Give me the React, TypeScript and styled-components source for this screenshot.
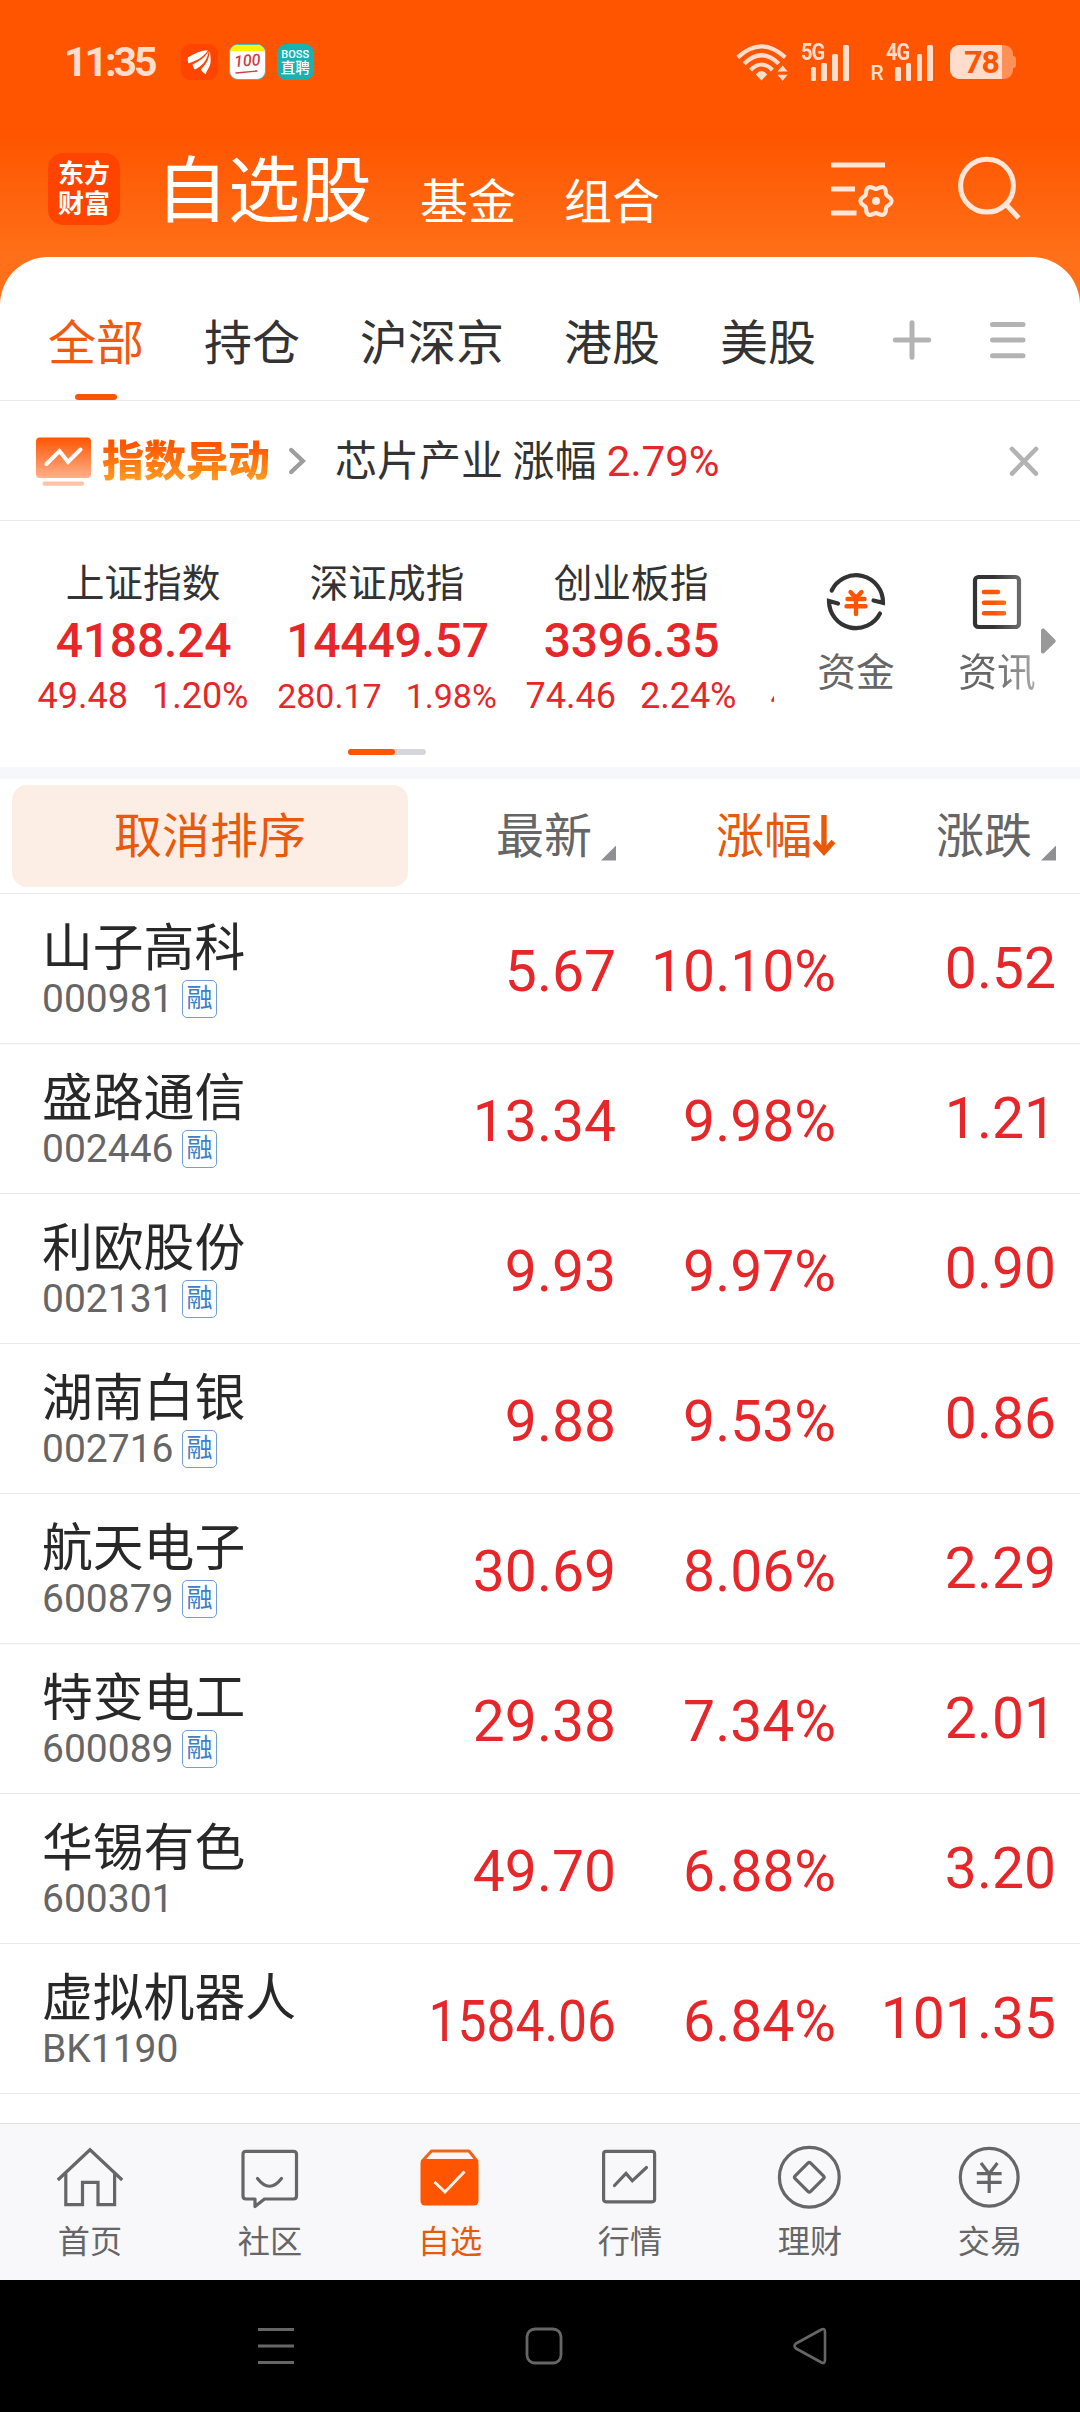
import React from "react";
import styled, { createGlobalStyle, css } from "styled-components";

const FONT = `Roboto, "Noto Sans CJK SC", sans-serif`;
const BRAND = "#ff5500";
const ACCENT = "#e8590c";
const UP = "#e62629";
const INK = "#333333";
const MUTED = "#666666";
const LINE = "#e8e8e8";

const GlobalStyle = createGlobalStyle`
  * { box-sizing: border-box; }
  html, body { margin: 0; padding: 0; background: #000; }
  svg { display: block; flex: none; }
`;

const Screen = styled.div`
  width: 1080px;
  height: 2412px;
  display: flex;
  flex-direction: column;
  overflow: hidden;
  font-family: ${FONT};
  color: ${INK};
  background: #fff;
  white-space: nowrap;
`;

/* ---------- top area ---------- */

const Top = styled.header`
  height: 305px;
  flex: none;
  background: linear-gradient(180deg, ${BRAND} 0, ${BRAND} 135px, #ff7018 257px, #ff7018 100%);
`;

const StatusBar = styled.div`
  height: 124px;
  display: flex;
  align-items: center;
  padding: 0 64px 0 64px;
`;

const Clock = styled.span`
  width: 117px;
  font-size: 41px;
  line-height: 48px;
  font-weight: 700;
  letter-spacing: -3px;
  color: #ffddcc;
`;

const AppIcons = styled.div`
  display: flex;
  gap: 11.5px;
`;

const AppIcon = styled.div<{ $bg: string }>`
  width: 36.5px;
  height: 36.5px;
  border-radius: 9px;
  background: ${(p) => p.$bg};
  overflow: hidden;
  display: flex;
  flex-direction: column;
  align-items: center;
  justify-content: center;
`;

const NoteIcon = styled(AppIcon)`
  border: 1.5px solid #3fc0c0;
  border-top-width: 1px;
  justify-content: flex-start;
`;

const NoteStrip = styled.div`
  width: 100%;
  height: 6px;
  flex: none;
  background: #fff200;
`;

const Hundred = styled.span`
  font-size: 16px;
  line-height: 19px;
  font-weight: 500;
  font-style: italic;
  color: #d23c44;
  transform: rotate(-4deg);
`;

const BossName = styled.span<{ $size: number }>`
  font-size: ${(p) => p.$size}px;
  line-height: 14px;
  font-weight: 500;
  color: #fff;
`;

const StatusIcons = styled.div`
  display: flex;
  align-items: center;
  margin-left: auto;
`;

const Signal = styled.div<{ $gap: number }>`
  display: flex;
  align-items: flex-end;
  height: 37px;
  margin-left: ${(p) => p.$gap}px;
  color: #ffddcc;
`;

const Net = styled.span`
  align-self: flex-start;
  width: 23px;
  margin-right: -13.5px;
  font-size: 23px;
  line-height: 17px;
  font-weight: 700;
  letter-spacing: -1.2px;
  transform: scaleX(0.87);
  transform-origin: left;
`;

const Roaming = styled.span`
  width: 15px;
  font-size: 21px;
  line-height: 16px;
  font-weight: 500;
`;

const Bars = styled.div`
  display: flex;
  align-items: flex-end;
  gap: 5.2px;
`;

const Bar = styled.i<{ $h: number }>`
  width: 5.6px;
  height: ${(p) => p.$h}px;
  border-radius: 1.5px;
  background: #ffddcc;
`;

const Battery = styled.div`
  display: flex;
  align-items: center;
  margin-left: 17px;
`;

const BatteryBody = styled.div`
  width: 63px;
  height: 34px;
  border-radius: 9px;
  background: linear-gradient(90deg, #ffddcc 52px, #ff9058 52px);
  color: ${BRAND};
  font-size: 32px;
  line-height: 35px;
  font-weight: 700;
  letter-spacing: -1px;
  text-align: center;
`;

const BatteryNub = styled.div`
  width: 3px;
  height: 12px;
  border-radius: 0 3px 3px 0;
  background: #ff9058;
`;

const TitleBar = styled.div`
  height: 133px;
  display: flex;
  align-items: flex-start;
  padding: 29px 56px 0 48px;
`;

const Logo = styled.div`
  width: 72px;
  height: 72px;
  border-radius: 15px;
  background: #ff4400;
  color: #fff;
  font-size: 26px;
  line-height: 30px;
  font-weight: 700;
  text-align: center;
  padding-top: 6px;
`;

const Title = styled.h1`
  margin: 3px 0 0 36px;
  font-size: 72px;
  line-height: 72px;
  font-weight: 400;
  color: #fff;
`;

const SubTitle = styled.span<{ $gap: number }>`
  margin: 26px 0 0 ${(p) => p.$gap}px;
  font-size: 48px;
  line-height: 48px;
  color: #fff;
`;

const TitleTools = styled.div`
  display: flex;
  gap: 60px;
  margin: 2px 0 0 auto;
`;

/* ---------- tabs ---------- */

const Panel = styled.main`
  height: 1866px;
  margin-top: -48px;
  flex: none;
  background: #fff;
  border-radius: 48px 48px 0 0;
  overflow: hidden;
  display: flex;
  flex-direction: column;
`;

const Tabs = styled.nav`
  height: 144px;
  flex: none;
  display: flex;
  align-items: flex-start;
  gap: 60px;
  padding: 0 53px 0 48px;
  border-bottom: 1px solid ${LINE};
`;

const Tab = styled.div<{ $active?: boolean }>`
  height: 143px;
  padding-top: 63px;
  font-size: 48px;
  line-height: 48px;
  color: ${(p) => (p.$active ? "#f05a10" : INK)};
  display: flex;
  flex-direction: column;
  align-items: center;
`;

const TabMark = styled.div`
  width: 42px;
  height: 6px;
  margin-top: auto;
  border-radius: 3px;
  background: ${BRAND};
`;

const TabTools = styled.div`
  display: flex;
  gap: 57px;
  margin: 62px 0 0 auto;
`;

/* ---------- index alert ---------- */

const Alert = styled.section`
  height: 120px;
  flex: none;
  display: flex;
  align-items: center;
  padding: 0 40px 0 36px;
  border-bottom: 1px solid ${LINE};
`;

const AlertTitle = styled.b`
  margin: 3px 18px 0 11px;
  font-size: 42px;
  line-height: 50px;
  font-weight: 900;
  background: linear-gradient(180deg, #ff5500 15%, #ff9e22 90%);
  background-clip: text;
  -webkit-background-clip: text;
  color: transparent;
`;

const AlertText = styled.span`
  margin: 2px 0 0 28px;
  font-size: 42px;
  line-height: 48px;
  word-spacing: -1px;
`;

const Rise = styled.span`
  margin-left: 1px;
  color: ${UP};
`;

const CloseSlot = styled.div`
  margin-left: auto;
`;

/* ---------- indices ---------- */

const IndexBoard = styled.section`
  height: 246px;
  flex: none;
  display: flex;
`;

const IndexPane = styled.div`
  width: 774px;
  height: 246px;
  padding-left: 21px;
  overflow: hidden;
`;

const IndexStrip = styled.div`
  height: 228px;
  display: flex;
`;

const IndexCol = styled.div`
  width: 244px;
  flex: none;
  padding-top: 39px;
  display: flex;
  flex-direction: column;
  align-items: center;
`;

const IndexName = styled.div`
  font-size: 38.7px;
  line-height: 48px;
`;

const IndexValue = styled.div`
  margin: 5px 0 0 1px;
  font-size: 48px;
  line-height: 56px;
  font-weight: 500;
  letter-spacing: -0.2px;
  color: ${UP};
`;

const IndexDelta = styled.div<{ $size: number }>`
  margin-top: 5px;
  min-width: 209px;
  display: flex;
  align-items: baseline;
  gap: 24px;
  font-size: ${(p) => p.$size}px;
  line-height: 44px;
  color: ${UP};
`;

const PeekCol = styled(IndexCol)`
  padding-top: 148px;
`;

const Pager = styled.div`
  width: 78px;
  height: 6px;
  margin-left: 327px;
  border-radius: 3px;
  background: #d3d6da;
`;

const PagerThumb = styled.div`
  width: 47px;
  height: 6px;
  border-radius: 3px;
  background: ${BRAND};
`;

const Shortcuts = styled.div`
  flex: 1;
  display: flex;
  align-items: flex-start;
  padding-left: 42px;
`;

const Shortcut = styled.div<{ $fade?: boolean }>`
  width: 80px;
  padding-top: 50px;
  display: flex;
  flex-direction: column;
  align-items: center;
  gap: 16px;
  font-size: 38.7px;
  line-height: 48px;
  color: ${MUTED};
  ${(p) =>
    p.$fade &&
    css`
      margin-left: 61px;
      mask-image: linear-gradient(90deg, #000 45%, rgba(0, 0, 0, 0.55) 100%);
    `}
`;

const MoreSlot = styled.div`
  margin: 107px 0 0 4px;
`;

const Band = styled.div`
  height: 12px;
  flex: none;
  background: #f5f7fa;
`;

/* ---------- quote table ---------- */

const SortBar = styled.div`
  height: 115px;
  flex: none;
  display: grid;
  grid-template-columns: 396px 208px 220px 220px;
  align-items: center;
  padding-left: 12px;
  border-bottom: 1px solid ${LINE};
`;

const CancelSort = styled.button`
  width: 396px;
  height: 102px;
  border: 0;
  border-radius: 15px;
  background: #fdeee5;
  color: ${ACCENT};
  font-family: inherit;
  font-size: 48px;
  line-height: 48px;
  padding: 2px 0 0;
`;

const SortHead = styled.div<{ $active?: boolean }>`
  display: flex;
  justify-content: flex-end;
  align-items: center;
  padding-top: 2px;
  font-size: 48px;
  line-height: 50px;
  color: ${(p) => (p.$active ? ACCENT : MUTED)};
`;

const Corner = styled.i`
  width: 15px;
  height: 15px;
  margin: 32px 0 0 9px;
  background: #8f8f94;
  clip-path: polygon(100% 0, 100% 100%, 0 100%);
`;

const QuoteRow = styled.div`
  height: 150px;
  flex: none;
  display: grid;
  grid-template-columns: 354px 220px 220px 220px;
  padding-left: 42px;
  border-bottom: 1px solid ${LINE};
`;

const StockCell = styled.div<{ $drop?: number }>`
  padding-top: ${(p) => 26 + (p.$drop ?? 0)}px;
`;

const StockName = styled.div`
  font-size: 50.8px;
  line-height: 57px;
  color: #282828;
`;

const StockMeta = styled.div`
  display: flex;
  align-items: center;
  height: 42px;
  margin-top: 1px;
  gap: 8px;
  font-size: 39px;
  line-height: 42px;
  color: ${MUTED};
`;

const Code = styled.span`
  min-width: 132px;
`;

const MarginTag = styled.span`
  width: 35px;
  height: 38px;
  border: 1.5px solid #6f9fd6;
  border-radius: 5px;
  font-size: 26px;
  line-height: 35px;
  text-align: center;
  color: #3a7fc8;
`;

const Num = styled.div<{ $raise?: boolean; $squeeze?: boolean }>`
  display: flex;
  justify-content: flex-end;
  padding-top: ${(p) => (p.$raise ? 41 : 44)}px;
  font-size: 57px;
  line-height: 67px;
  color: ${UP};
  ${(p) =>
    p.$squeeze &&
    css`
      transform: scaleX(0.905);
      transform-origin: right;
    `}
`;

/* ---------- bottom ---------- */

const BottomNav = styled.nav`
  height: 157px;
  flex: none;
  display: grid;
  grid-template-columns: repeat(6, 180px);
  background: #f8f8fb;
  border-top: 1px solid #dfdfe2;
`;

const NavItem = styled.div<{ $active?: boolean }>`
  display: flex;
  flex-direction: column;
  align-items: center;
  padding-top: 19px;
  gap: 12px;
  font-size: 32.2px;
  line-height: 38px;
  color: ${(p) => (p.$active ? ACCENT : MUTED)};
`;

const SystemNav = styled.footer`
  height: 132px;
  flex: none;
  display: flex;
  align-items: center;
  justify-content: space-between;
  padding: 0 249px 0 256px;
  background: #000;
`;

/* ---------- drawings ---------- */

type IconProps = { box: string; children: React.ReactNode; color?: string; stroke?: number };

const Icon = ({ box, children, color = "currentColor", stroke = 3.2 }: IconProps) => {
  const [, , w, h] = box.split(" ");
  return (
    <svg
      width={w}
      height={h}
      viewBox={box}
      fill="none"
      stroke={color}
      strokeWidth={stroke}
      strokeLinecap="round"
      strokeLinejoin="round"
    >
      {children}
    </svg>
  );
};

const gearPath = (cx: number, cy: number) => {
  const pts: string[] = [];
  for (let i = 0; i < 120; i++) {
    const t = (i / 120) * Math.PI * 2;
    const r = 13.8 + 1.7 * Math.cos(6 * t);
    pts.push(`${(cx + r * Math.cos(t)).toFixed(2)} ${(cy + r * Math.sin(t)).toFixed(2)}`);
  }
  return `M${pts.join("L")}Z`;
};

const WifiIcon = () => (
  <Icon box="0 0 52 37" color="#ffddcc" stroke={4.2}>
    <g strokeLinecap="butt">
      <path d="M1.8 13.4 Q25.5 -8.6 49.2 13.4" />
      <path d="M8.2 19.7 Q25.5 2.8 42.8 19.7" />
      <path d="M14.6 26 Q25.5 15 36.4 26" />
    </g>
    <path d="M19.8 30.4 Q25.5 23.6 31.2 30.4 L25.5 36.4Z" fill="#ffddcc" stroke="none" />
    <path d="M41.5 27.5 L46.6 21.5 L51.7 27.5Z M41.5 30.8 L46.6 36.8 L51.7 30.8Z" fill="#ffddcc" stroke="none" />
  </Icon>
);

const BirdIcon = () => (
  <svg width="36" height="36" viewBox="0 0 36 36" fill="#fff">
    <path d="M27 6.2 C20 6.2 14 9.5 7 13.2 C6.4 15.5 6.8 17.5 7.5 19.5 C14 17 22 14 27 6.2Z" />
    <path d="M27.6 7 C24 14 18 17 11.6 20.5 C11.8 22.6 12.5 24 14 25.6 C20 22.5 26.5 17 27.6 7Z" />
    <path d="M28.4 7 C28.5 16 24 21 20 25.6 C21 28 22.5 29.3 24.8 30.2 C25.5 26 29.5 23.5 29.6 17.5 C29.7 13 29.5 10 28.4 7Z" />
  </svg>
);

const navItems = [
  {
    label: "首页",
    icon: (
      <Icon box="56 2143 68 68">
        <g strokeLinecap="butt" strokeLinejoin="miter">
          <path d="M57.8 2180 L90 2149.8 L122.2 2180" />
          <path d="M65.8 2173.5 V2204.6 H82.5 V2182.3 H98 V2204.6 H114.6 V2173.5" />
        </g>
      </Icon>
    ),
  },
  {
    label: "社区",
    icon: (
      <Icon box="236 2143 68 68">
        <path d="M246 2151.3 H293.5 Q296.5 2151.3 296.5 2154.3 V2196 Q296.5 2199 293.5 2199 H264.5 L255 2206.6 V2199 H246 Q243 2199 243 2196 V2154.3 Q243 2151.3 246 2151.3Z" />
        <path d="M257.5 2178.5 Q269.5 2194 281.5 2178.5" />
      </Icon>
    ),
  },
  {
    label: "自选",
    active: true,
    icon: (
      <Icon box="416 2143 68 68" color={BRAND}>
        <path d="M422.3 2161 L431.5 2151 H469 L477 2161" stroke="#f06418" strokeWidth={3} />
        <rect x="420.5" y="2159" width="58" height="46.5" rx="4.5" fill={BRAND} stroke="none" />
        <path d="M434.5 2182 L445 2192 L464.5 2171.5" stroke="#fff3ea" strokeWidth={3} strokeLinecap="butt" strokeLinejoin="miter" />
      </Icon>
    ),
  },
  {
    label: "行情",
    icon: (
      <Icon box="596 2143 68 68">
        <rect x="603.6" y="2151.3" width="51" height="50.5" rx="2.5" />
        <path d="M614.5 2185.5 L626 2173.5 L632.3 2180.8 L646.5 2167.5" strokeLinejoin="miter" />
      </Icon>
    ),
  },
  {
    label: "理财",
    icon: (
      <Icon box="776 2143 68 68">
        <circle cx="809.3" cy="2177.3" r="29.9" />
        <rect x="798.3" y="2166.3" width="22" height="22" rx="2" transform="rotate(45 809.3 2177.3)" />
      </Icon>
    ),
  },
  {
    label: "交易",
    icon: (
      <Icon box="956 2143 68 68">
        <circle cx="989.2" cy="2177.2" r="28.9" />
        <path d="M976.8 2173.7 H1001.6 M976.8 2182.3 H1001.6 M981 2163 L989.2 2173.7 L997.4 2163 M989.2 2173.7 V2193" strokeLinecap="butt" />
      </Icon>
    ),
  },
];

/* ---------- data ---------- */

const tabs = ["全部", "持仓", "沪深京", "港股", "美股"];

const indices = [
  { name: "上证指数", value: "4188.24", diff: "49.48", pct: "1.20%", size: 36 },
  { name: "深证成指", value: "14449.57", diff: "280.17", pct: "1.98%", size: 34 },
  { name: "创业板指", value: "3396.35", diff: "74.46", pct: "2.24%", size: 36 },
];

const quotes = [
  { name: "山子高科", code: "000981", margin: true, last: "5.67", pct: "10.10%", diff: "0.52" },
  { name: "盛路通信", code: "002446", margin: true, last: "13.34", pct: "9.98%", diff: "1.21" },
  { name: "利欧股份", code: "002131", margin: true, last: "9.93", pct: "9.97%", diff: "0.90" },
  { name: "湖南白银", code: "002716", margin: true, last: "9.88", pct: "9.53%", diff: "0.86" },
  { name: "航天电子", code: "600879", margin: true, last: "30.69", pct: "8.06%", diff: "2.29" },
  { name: "特变电工", code: "600089", margin: true, last: "29.38", pct: "7.34%", diff: "2.01" },
  { name: "华锡有色", code: "600301", margin: false, last: "49.70", pct: "6.88%", diff: "3.20" },
  { name: "虚拟机器人", code: "BK1190", margin: false, last: "1584.06", pct: "6.84%", diff: "101.35" },
];

const SignalBars = () => (
  <Bars>
    {[14, 18, 27, 36].map((h) => (
      <Bar key={h} $h={h} />
    ))}
  </Bars>
);

export default function App() {
  return (
    <Screen>
      <GlobalStyle />
      <Top>
        <StatusBar>
          <Clock>11:35</Clock>
          <AppIcons>
            <AppIcon $bg="#ff4400">
              <BirdIcon />
            </AppIcon>
            <NoteIcon $bg="#ffffff">
              <NoteStrip />
              <Hundred>100</Hundred>
              <Icon box="0 0 26 4" color="#d23c44" stroke={1.4}>
                <path d="M2 3 L23 1" />
              </Icon>
            </NoteIcon>
            <AppIcon $bg="#19b1b1">
              <BossName $size={11}>BOSS</BossName>
              <BossName $size={14.5}>直聘</BossName>
            </AppIcon>
          </AppIcons>
          <StatusIcons>
            <WifiIcon />
            <Signal $gap={13}>
              <Net>5G</Net>
              <SignalBars />
            </Signal>
            <Signal $gap={22}>
              <Roaming>R</Roaming>
              <Net>4G</Net>
              <SignalBars />
            </Signal>
            <Battery>
              <BatteryBody>78</BatteryBody>
              <BatteryNub />
            </Battery>
          </StatusIcons>
        </StatusBar>
        <TitleBar>
          <Logo>
            东方
            <br />
            财富
          </Logo>
          <Title>自选股</Title>
          <SubTitle $gap={48}>基金</SubTitle>
          <SubTitle $gap={48}>组合</SubTitle>
          <TitleTools>
            <Icon box="828 155 66 66" color="#ffe6d9" stroke={5}>
              <path d="M831 165 H885 M831 189 H855 M831 213 H856.5" strokeLinecap="butt" />
              <path d={gearPath(876, 201)} stroke="#ffe6d9" strokeWidth={4.2} />
              <circle cx="876" cy="201" r="4" fill="#ffe6d9" stroke="none" />
            </Icon>
            <Icon box="954 155 70 68" color="#ffe6d9" stroke={5}>
              <circle cx="987" cy="185.7" r="26.4" />
              <path d="M1005.5 204 L1018.7 218" strokeLinecap="butt" />
            </Icon>
          </TitleTools>
        </TitleBar>
      </Top>

      <Panel>
        <Tabs>
          {tabs.map((t, i) => (
            <Tab key={t} $active={i === 0}>
              {t}
              {i === 0 && <TabMark />}
            </Tab>
          ))}
          <TabTools>
            <Icon box="0 0 40 42" color="#b3b3b3" stroke={5}>
              <path d="M20 3.7 V38.3 M3.3 21 H36.7" />
            </Icon>
            <Icon box="0 0 38 42" color="#b3b3b3" stroke={5}>
              <path d="M3.5 5.5 H34 M3.5 21 H34 M3.5 36.7 H34" />
            </Icon>
          </TabTools>
        </Tabs>

        <Alert>
          <svg width="55" height="50" viewBox="0 0 55 50">
            <defs>
              <linearGradient id="alert" x1="0" y1="0" x2="0" y2="1">
                <stop offset="0" stopColor="#ff5500" />
                <stop offset="1" stopColor="#ffb08c" />
              </linearGradient>
            </defs>
            <rect x="0" y="1.5" width="55" height="40.5" rx="4" fill="url(#alert)" />
            <path d="M10.5 28 L23.5 15 L32 26 L44.5 13.5" fill="none" stroke="#fff" strokeWidth="4" strokeLinecap="round" />
            <rect x="6.5" y="45.5" width="41.5" height="4.3" rx="2.1" fill="#ffc4a8" />
          </svg>
          <AlertTitle>指数异动</AlertTitle>
          <Icon box="0 0 19 30" color="#9d9d9d" stroke={4.4}>
            <path d="M3.2 4 L14.8 15 L3.2 26" strokeLinejoin="miter" />
          </Icon>
          <AlertText>
            芯片产业 涨幅 <Rise>2.79%</Rise>
          </AlertText>
          <CloseSlot>
            <Icon box="0 0 32 32" color="#b3b3b3" stroke={4.6}>
              <path d="M4 4 L28 28.6 M28 4 L4 28.6" />
            </Icon>
          </CloseSlot>
        </Alert>

        <IndexBoard>
          <IndexPane>
            <IndexStrip>
              {indices.map((x) => (
                <IndexCol key={x.name}>
                  <IndexName>{x.name}</IndexName>
                  <IndexValue>{x.value}</IndexValue>
                  <IndexDelta $size={x.size}>
                    <span>{x.diff}</span>
                    <span>{x.pct}</span>
                  </IndexDelta>
                </IndexCol>
              ))}
              <PeekCol>
                <IndexDelta $size={36}>4</IndexDelta>
              </PeekCol>
            </IndexStrip>
            <Pager>
              <PagerThumb />
            </Pager>
          </IndexPane>
          <Shortcuts>
            <Shortcut>
              <Icon box="825 571 62 62" color={INK} stroke={4.2}>
                <path d="M831.7 590.5 A27 27 0 0 1 883 602.8 L873.5 600.5" strokeLinejoin="miter" />
                <path d="M880 613.5 A27 27 0 0 1 829 601 L838 603.5" strokeLinejoin="miter" />
                <path
                  d="M850.5 592 L856 598 L861.5 592 M847.5 599 H864.5 M846.5 606.3 H865.5 M856 598 V614"
                  stroke={BRAND}
                  strokeWidth={4.4}
                />
              </Icon>
              资金
            </Shortcut>
            <Shortcut $fade>
              <Icon box="966 571 62 62" color={INK} stroke={4.2}>
                <rect x="975" y="577" width="44" height="50" rx="3.5" />
                <path d="M984 592 H998 M984 602.7 H1004 M984 613.3 H1004" stroke={BRAND} strokeWidth={4.6} />
              </Icon>
              资讯
            </Shortcut>
            <MoreSlot>
              <svg width="15" height="26" viewBox="0 0 15 26">
                <path d="M0 2.5 Q0 0 3 .6 L14 11.5 Q15.5 13 14 14.5 L3 25.3 Q0 26 0 23.5Z" fill="#999" />
              </svg>
            </MoreSlot>
          </Shortcuts>
        </IndexBoard>

        <Band />

        <SortBar>
          <CancelSort>取消排序</CancelSort>
          <SortHead>
            最新
            <Corner />
          </SortHead>
          <SortHead $active>
            涨幅
            <Icon box="0 0 24 44" stroke={5.4}>
              <path d="M12 0 V36" strokeLinecap="butt" />
              <path d="M2.5 26.5 L12 37 L21.5 26.5" strokeLinecap="butt" strokeLinejoin="miter" />
            </Icon>
          </SortHead>
          <SortHead>
            涨跌
            <Corner />
          </SortHead>
        </SortBar>

        {quotes.map((q) => (
          <QuoteRow key={q.code}>
            <StockCell>
              <StockName>{q.name}</StockName>
              <StockMeta>
                <Code>{q.code}</Code>
                {q.margin && <MarginTag>融</MarginTag>}
              </StockMeta>
            </StockCell>
            <Num $squeeze={q.last.length > 6}>{q.last}</Num>
            <Num>{q.pct}</Num>
            <Num $raise>{q.diff}</Num>
          </QuoteRow>
        ))}
        <QuoteRow>
          <StockCell $drop={2}>
            <StockName>中钨高新</StockName>
          </StockCell>
        </QuoteRow>
      </Panel>

      <BottomNav>
        {navItems.map((n) => (
          <NavItem key={n.label} $active={n.active}>
            {n.icon}
            {n.label}
          </NavItem>
        ))}
      </BottomNav>

      <SystemNav>
        <Icon box="0 0 40 40" color="#666" stroke={3}>
          <path d="M2 3.5 H38 M2 20 H38 M2 36.5 H38" strokeLinecap="butt" />
        </Icon>
        <Icon box="0 0 40 40" color="#666" stroke={2.8}>
          <rect x="3" y="3" width="34" height="34" rx="8" />
        </Icon>
        <Icon box="0 0 40 40" color="#666" stroke={2.6}>
          <path d="M5 17.5 L30.5 3.5 Q34 2 34 6 V34 Q34 38 30.5 36.5 L5 22.5 Q2 20 5 17.5Z" />
        </Icon>
      </SystemNav>
    </Screen>
  );
}
